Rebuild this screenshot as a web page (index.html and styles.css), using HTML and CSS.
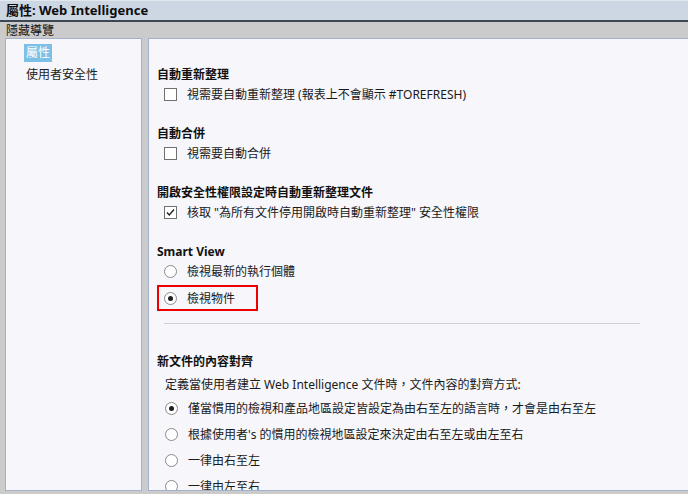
FILE: index.html
```html
<!DOCTYPE html>
<html lang="zh-Hant">
<head>
<meta charset="utf-8">
<title>屬性: Web Intelligence</title>
<link rel="stylesheet" href="styles.css">
</head>
<body>
<div class="titlebar">屬性: Web Intelligence</div>
<div class="subbar">隱藏導覽</div>
<div class="main">
  <nav class="nav">
    <div class="nav-item selected">屬性</div>
    <div class="nav-item">使用者安全性</div>
  </nav>
  <section class="content">
    <div class="group">
      <div class="heading">自動重新整理</div>
      <div class="row"><span class="check"></span><span>視需要自動重新整理 (報表上不會顯示 #TOREFRESH)</span></div>
    </div>
    <div class="group">
      <div class="heading">自動合併</div>
      <div class="row"><span class="check"></span><span>視需要自動合併</span></div>
    </div>
    <div class="group">
      <div class="heading">開啟安全性權限設定時自動重新整理文件</div>
      <div class="row"><span class="check checked"><svg width="11" height="11" viewBox="0 0 11 11"><path d="M2 5.5 L4.3 8 L9 2.5" fill="none" stroke="#222" stroke-width="1.4"/></svg></span><span>核取 "為所有文件停用開啟時自動重新整理" 安全性權限</span></div>
    </div>
    <div class="group before-sep">
      <div class="heading">Smart View</div>
      <div class="row"><span class="radio"></span><span>檢視最新的執行個體</span></div>
      <div class="row boxed"><span class="radio on"></span><span>檢視物件</span></div>
    </div>
    <hr class="sep">
    <div class="group">
      <div class="heading">新文件的內容對齊</div>
      <div class="desc">定義當使用者建立 Web Intelligence 文件時，文件內容的對齊方式:</div>
      <div class="row tall"><span class="radio on"></span><span>僅當慣用的檢視和產品地區設定皆設定為由右至左的語言時，才會是由右至左</span></div>
      <div class="row tall"><span class="radio"></span><span>根據使用者's 的慣用的檢視地區設定來決定由右至左或由左至右</span></div>
      <div class="row tall"><span class="radio"></span><span>一律由右至左</span></div>
      <div class="row tall"><span class="radio"></span><span>一律由左至右</span></div>
    </div>
  </section>
</div>
</body>
</html>
```
FILE: styles.css
```css
* { box-sizing: border-box; }
html, body {
  margin: 0;
  padding: 0;
  width: 688px;
  height: 494px;
  overflow: hidden;
  background: #cbcbcb;
  font-family: "Noto Sans", "Noto Sans CJK TC", sans-serif;
  font-size: 12px;
  color: #1a1a1a;
}
.titlebar {
  height: 22px;
  background: #cdd6e3;
  border-top: 1px solid #e3e7ee;
  border-bottom: 2px solid #3e4653;
  padding-left: 6px;
  font-weight: bold;
  font-size: 13px;
  line-height: 19px;
  color: #0d0d0d;
}
.subbar {
  height: 16px;
  padding-left: 6px;
  line-height: 17px;
  font-size: 12px;
  color: #111;
}
.main {
  display: flex;
  gap: 6px;
  padding-left: 5px;
  height: 456px;
}
.nav {
  width: 137px;
  height: 453px;
  background: #f6f6fb;
  border: 1px solid #a4b1ca;
  padding-top: 5px;
}
.nav-item {
  line-height: 18px;
  margin-left: 20px;
  margin-bottom: 4px;
  color: #222;
  width: max-content;
}
.nav-item.selected {
  background: #7cc0e6;
  color: #fff;
  margin-left: 18px;
  padding: 0 2px;
}
.content {
  flex: 1;
  height: 453px;
  background: #f6f6fb;
  border: 1px solid #a4b1ca;
  border-right: none;
  padding: 25px 0 0 8px;
  overflow: hidden;
}
.group { margin-bottom: 18px; }
.group.before-sep { margin-bottom: 0; }
.heading {
  height: 19px;
  padding-top: 1px;
  line-height: 20px;
  font-weight: bold;
  color: #111;
}
.row {
  display: flex;
  align-items: center;
  height: 22px;
  padding-left: 7px;
  gap: 10px;
  white-space: nowrap;
}
.row.tall { height: 26px; padding-left: 8px; }
.row.boxed {
  margin-top: 3px;
  height: 26px;
  width: 101px;
  border: 2px solid #ee0000;
  padding-left: 5px;
}
.check {
  width: 13px;
  height: 13px;
  border: 1px solid #707070;
  background: #fff;
  display: flex;
  align-items: center;
  justify-content: center;
  flex: none;
}
.radio {
  width: 13px;
  height: 13px;
  border: 1px solid #8a8a8a;
  border-radius: 50%;
  background: #fff;
  display: flex;
  align-items: center;
  justify-content: center;
  flex: none;
}
.radio.on::after {
  content: "";
  width: 5px;
  height: 5px;
  border-radius: 50%;
  background: #1f1f1f;
}
.sep {
  border: none;
  border-top: 1px solid #cfcfcf;
  margin: 12px 0 27px 7px;
  width: 476px;
}
.desc {
  margin-top: 4px;
  height: 21px;
  line-height: 22px;
  padding-left: 8px;
  white-space: nowrap;
}
.group:last-child { margin-bottom: 0; }
```
